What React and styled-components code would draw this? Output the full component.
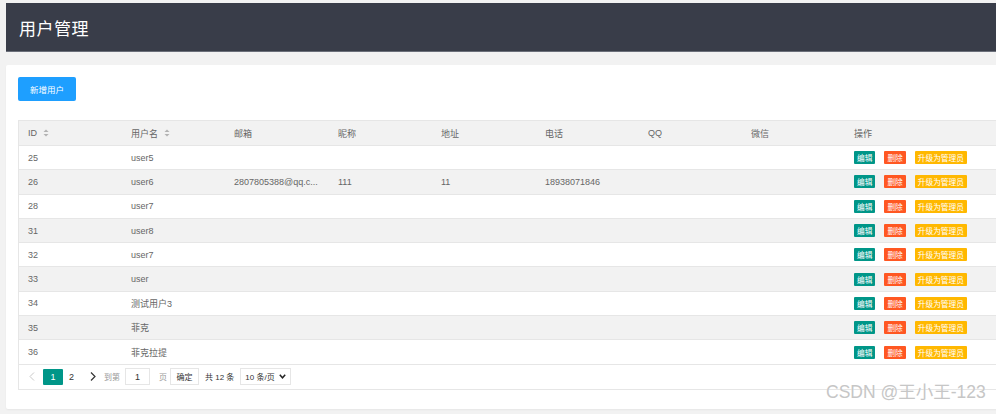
import React from "react";
import styled, { createGlobalStyle } from "styled-components";

const Global = createGlobalStyle`
  html, body { margin: 0; padding: 0; background: #f2f2f2; overflow: hidden; }
  body { font-family: "Liberation Sans", "Noto Sans CJK SC", Arial, sans-serif; }
  * { box-sizing: border-box; }
`;

const Page = styled.div`
  width: 1120px;
  padding: 3px 0 0 6px;
  position: relative;
  height: 414px;
`;

const TopBar = styled.div`
  height: 49px;
  background: #393d49;
  border-bottom: 1px solid #6b6f7a;
  display: flex;
  align-items: center;
  padding-left: 13px;
`;

const Title = styled.h1`
  margin: 0;
  font-weight: 400;
  font-size: 17px;
  color: #fff;
  font-family: "Noto Sans CJK SC", sans-serif;
  letter-spacing: 0.5px;
`;

const Card = styled.div`
  margin-top: 13px;
  background: #fff;
  border-radius: 2px;
  padding: 12px 12px 19px 12px;
  box-shadow: 0 1px 2px rgba(0, 0, 0, 0.05);
`;

const PrimaryButton = styled.button`
  height: 24px;
  width: 58px;
  border: none;
  border-radius: 2px;
  background: #1e9fff;
  color: #fff;
  font-size: 8.5px;
  font-family: "Noto Sans CJK SC", sans-serif;
  padding: 0;
  cursor: pointer;
`;

const Table = styled.div`
  margin-top: 19px;
  border: 1px solid #e6e6e6;
  border-bottom: none;
  color: #666;
  font-size: 9px;
`;

const cols = "103px 103px 104px 103px 104px 103px 103px 103px 1fr";

const HeadRow = styled.div`
  display: grid;
  grid-template-columns: ${cols};
  height: 25px;
  background: #f2f2f2;
  border-bottom: 1px solid #e6e6e6;
  align-items: center;
`;

const Row = styled.div`
  display: grid;
  grid-template-columns: ${cols};
  height: 24.3px;
  background: ${(p) => (p.$striped ? "#f2f2f2" : "#fff")};
  border-bottom: 1px solid #e6e6e6;
  align-items: center;
`;

const Cell = styled.div`
  padding-left: 9px;
  white-space: nowrap;
  overflow: hidden;
  text-overflow: ellipsis;
  padding-right: 8px;
  display: flex;
  align-items: center;
  gap: 9px;
  font-family: "Liberation Sans", "Noto Sans CJK SC", sans-serif;
`;

const EmailText = styled.span`
  overflow: hidden;
  text-overflow: ellipsis;
  white-space: nowrap;
`;

const SortIcon = () => (
  <svg width="6" height="8" viewBox="0 0 6 8" style={{ marginLeft: -3 }}>
    <path d="M0.5 3 L3 0.5 L5.5 3 Z" fill="#b2b2b2" />
    <path d="M0.5 5 L3 7.5 L5.5 5 Z" fill="#b2b2b2" />
  </svg>
);

const ActionButton = styled.button`
  height: 13px;
  padding: 0 3px;
  border: none;
  border-radius: 1px;
  background: ${(p) => p.$color};
  color: #fff;
  font-size: 7.7px;
  line-height: 13px;
  font-family: "Noto Sans CJK SC", sans-serif;
  cursor: pointer;
`;

const Pager = styled.div`
  height: 25px;
  border: 1px solid #e6e6e6;
  border-top: none;
  display: flex;
  align-items: center;
  padding-left: 5px;
  font-size: 9px;
  color: #333;
`;

const Arrow = styled.span`
  width: 15px;
  display: flex;
  justify-content: center;
  margin-left: ${(p) => p.$ml || 0}px;
  margin-right: ${(p) => p.$mr || 0}px;
`;

const PageNum = styled.span`
  width: ${(p) => (p.$active ? 20 : 17)}px;
  height: 16px;
  display: flex;
  align-items: center;
  justify-content: center;
  background: ${(p) => (p.$active ? "#009688" : "transparent")};
  color: ${(p) => (p.$active ? "#fff" : "#333")};
  border-radius: 1px;
`;

const Muted = styled.span`
  color: #999;
  font-family: "Noto Sans CJK SC", sans-serif;
  font-size: 8px;
  margin-right: ${(p) => p.$mr || 0}px;
`;

const PageInput = styled.div`
  width: 25px;
  height: 17px;
  border: 1px solid #e6e6e6;
  display: flex;
  align-items: center;
  justify-content: center;
  margin-right: 9px;
  color: #333;
`;

const ConfirmButton = styled.button`
  height: 17px;
  width: 29px;
  border: 1px solid #e6e6e6;
  background: #fff;
  font-size: 8px;
  color: #333;
  padding: 0;
  margin-left: 3px;
  margin-right: 6px;
  font-family: "Noto Sans CJK SC", sans-serif;
`;

const Total = styled.span`
  color: #333;
  font-family: "Liberation Sans", "Noto Sans CJK SC", sans-serif;
  font-size: 8px;
  margin-right: 6px;
`;

const Select = styled.div`
  width: 51px;
  height: 17px;
  border: 1px solid #e6e6e6;
  display: flex;
  align-items: center;
  justify-content: space-between;
  padding: 0 4px 0 4px;
  font-size: 8px;
  color: #333;
  font-family: "Liberation Sans", "Noto Sans CJK SC", sans-serif;
`;

const Watermark = styled.div`
  position: absolute;
  left: 826px;
  top: 378px;
  font-size: 17.5px;
  white-space: nowrap;
  color: #c6c6c6;
  font-family: "Liberation Sans", "Noto Sans CJK SC", sans-serif;
  text-shadow: 0 0 1px rgba(255,255,255,0.8);
  pointer-events: none;
`;

const rows = [
  { id: 25, name: "user5" },
  { id: 26, name: "user6", email: "2807805388@qq.com", nick: "111", addr: "11", phone: "18938071846" },
  { id: 28, name: "user7" },
  { id: 31, name: "user8" },
  { id: 32, name: "user7" },
  { id: 33, name: "user" },
  { id: 34, name: "测试用户3" },
  { id: 35, name: "菲克" },
  { id: 36, name: "菲克拉提" },
];

export default function App() {
  return (
    <>
      <Global />
      <Page>
        <TopBar>
          <Title>用户管理</Title>
        </TopBar>
        <Card>
          <PrimaryButton>新增用户</PrimaryButton>
          <Table>
            <HeadRow>
              <Cell>ID <SortIcon /></Cell>
              <Cell>用户名 <SortIcon /></Cell>
              <Cell>邮箱</Cell>
              <Cell>昵称</Cell>
              <Cell>地址</Cell>
              <Cell>电话</Cell>
              <Cell>QQ</Cell>
              <Cell>微信</Cell>
              <Cell>操作</Cell>
            </HeadRow>
            {rows.map((r, i) => (
              <Row key={r.id} $striped={i % 2 === 1}>
                <Cell>{r.id}</Cell>
                <Cell>{r.name}</Cell>
                <Cell><EmailText>{r.email ? "2807805388@qq.c..." : ""}</EmailText></Cell>
                <Cell>{r.nick || ""}</Cell>
                <Cell>{r.addr || ""}</Cell>
                <Cell>{r.phone || ""}</Cell>
                <Cell></Cell>
                <Cell></Cell>
                <Cell>
                  <ActionButton $color="#009688">编辑</ActionButton>
                  <ActionButton $color="#ff5722">删除</ActionButton>
                  <ActionButton $color="#ffb800">升级为管理员</ActionButton>
                </Cell>
              </Row>
            ))}
          </Table>
          <Pager>
            <Arrow $mr={4}>
              <svg width="6" height="9" viewBox="0 0 6 9"><path d="M5 0.5 L1 4.5 L5 8.5" fill="none" stroke="#c8c8c8" strokeWidth="1" /></svg>
            </Arrow>
            <PageNum $active>1</PageNum>
            <PageNum>2</PageNum>
            <Arrow $ml={5} $mr={4}>
              <svg width="6" height="9" viewBox="0 0 6 9"><path d="M1 0.5 L5 4.5 L1 8.5" fill="none" stroke="#333" strokeWidth="1.2" /></svg>
            </Arrow>
            <Muted $mr={5}>到第</Muted>
            <PageInput>1</PageInput>
            <Muted>页</Muted>
            <ConfirmButton>确定</ConfirmButton>
            <Total>共 12 条</Total>
            <Select>
              <span>10 条/页</span>
              <svg width="7" height="5" viewBox="0 0 7 5"><path d="M0.8 0.8 L3.5 3.8 L6.2 0.8" fill="none" stroke="#222" strokeWidth="1.5" /></svg>
            </Select>
          </Pager>
        </Card>
        <Watermark>CSDN @王小王-123</Watermark>
      </Page>
    </>
  );
}
